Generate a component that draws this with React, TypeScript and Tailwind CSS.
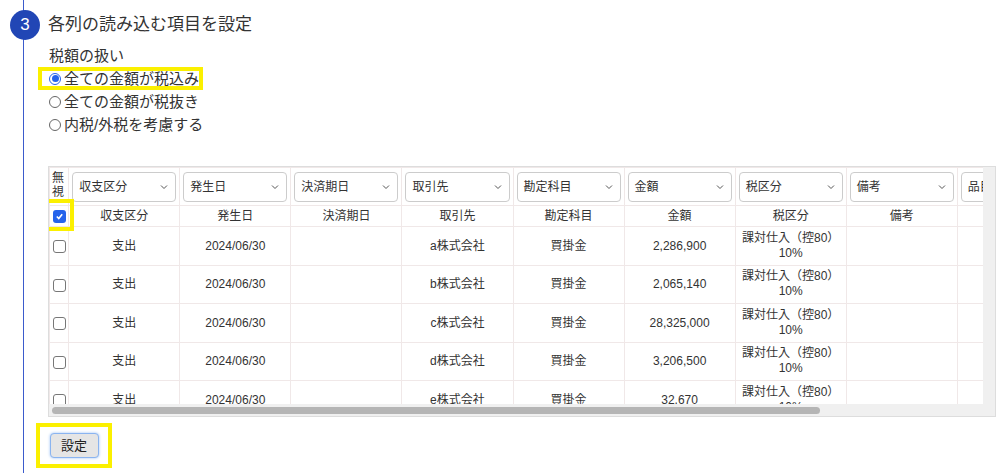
import React from 'react'

const cols = ['収支区分', '発生日', '決済期日', '取引先', '勘定科目', '金額', '税区分', '備考', '品目']
const rows = [
  ['a株式会社', '2,286,900'],
  ['b株式会社', '2,065,140'],
  ['c株式会社', '28,325,000'],
  ['d株式会社', '3,206,500'],
  ['e株式会社', '32,670'],
]

function Chevron() {
  return (
    <svg width="10" height="10" viewBox="0 0 10 10" className="shrink-0">
      <path d="M2 3.5 L5 6.5 L8 3.5" fill="none" stroke="#555" strokeWidth="1" />
    </svg>
  )
}

export default function App() {
  return (
    <div className="relative w-[1008px] h-[473px] bg-white overflow-hidden text-[#333]" style={{ fontFamily: '"Liberation Sans", "Noto Sans CJK JP", sans-serif' }}>
      <div className="absolute left-[23px] top-0 bottom-0 w-px bg-[#3b5bcc]" />
      <div className="relative flex flex-col pl-[10px] pt-[10px]">
        <div className="flex items-center gap-[8px]">
          <div className="w-[30px] h-[30px] rounded-full bg-[#2146b5] text-white flex items-center justify-center text-[17px]">3</div>
          <div className="text-[17px] text-[#333]">各列の読み込む項目を設定</div>
        </div>
        <div className="pl-[39px] mt-[4px] text-[15px] leading-[23px]">
          <div>税額の扱い</div>
          <div className="ml-[-11px] w-[165px] border-4 border-[#fbf000] pl-[7px] flex items-center gap-[3px] leading-[15px]">
            <span className="w-[12px] h-[12px] rounded-full border border-[#2563eb] flex items-center justify-center"><span className="w-[7px] h-[7px] rounded-full bg-[#2563eb]" /></span>
            全ての金額が税込み
          </div>
          <div className="flex items-center gap-[3px]"><span className="w-[12px] h-[12px] rounded-full border border-[#666]" />全ての金額が税抜き</div>
          <div className="flex items-center gap-[3px]"><span className="w-[12px] h-[12px] rounded-full border border-[#666]" />内税/外税を考慮する</div>
        </div>
        <div className="ml-[38px] mt-[30px] w-[948px] h-[251px] border border-[#ddd] bg-[#f0f0f0] flex flex-col overflow-hidden">
          <div className="w-[934px] h-[238px] bg-white overflow-hidden text-[12px]">
            <table className="border-collapse table-fixed w-[1020px]">
              <colgroup>
                <col className="w-[19px]" />
                {cols.map((c) => <col key={c} className="w-[110px]" />)}
              </colgroup>
              <tbody>
                <tr className="h-[38px]">
                  <td className="border border-[#f0e8e8] text-[12px] leading-[14px] align-top pt-[3px] pl-[2px] overflow-hidden">無視</td>
                  {cols.map((c) => (
                    <td key={c} className="border border-[#f0e8e8] px-[3px]">
                      <div className="h-[30px] border border-[#ccc] rounded-[4px] flex items-center justify-between px-[6px] text-[12px] overflow-hidden whitespace-nowrap">
                        <span>{c}</span><Chevron />
                      </div>
                    </td>
                  ))}
                </tr>
                <tr className="h-[21px]">
                  <td className="border border-[#f0e8e8] text-center relative">
                    <span className="absolute left-[-6px] top-[-7px] w-[30px] h-[32px] border-4 border-[#fbf000]" />
                    <span className="inline-flex w-[13px] h-[13px] rounded-[3px] bg-[#2563eb] items-center justify-center align-middle">
                      <svg width="9" height="9" viewBox="0 0 10 10"><path d="M2 5 L4.2 7.3 L8 2.5" fill="none" stroke="white" strokeWidth="1.8" /></svg>
                    </span>
                  </td>
                  {cols.map((c) => <td key={c} className="border border-[#f0e8e8] text-center">{c === '品目' ? '' : c}</td>)}
                </tr>
                {rows.map(([p, a]) => (
                  <tr key={p} className="h-[38.5px]">
                    <td className="border border-[#f0e8e8] text-center"><span className="inline-block w-[13px] h-[13px] rounded-[3px] border border-[#777] align-middle" /></td>
                    <td className="border border-[#f0e8e8] text-center">支出</td>
                    <td className="border border-[#f0e8e8] text-center">2024/06/30</td>
                    <td className="border border-[#f0e8e8]" />
                    <td className="border border-[#f0e8e8] text-center">{p}</td>
                    <td className="border border-[#f0e8e8] text-center">買掛金</td>
                    <td className="border border-[#f0e8e8] text-center">{a}</td>
                    <td className="border border-[#f0e8e8] text-center leading-[15px]">課対仕入（控80）<br />10%</td>
                    <td className="border border-[#f0e8e8]" />
                    <td className="border border-[#f0e8e8]" />
                  </tr>
                ))}
              </tbody>
            </table>
          </div>
          <div className="h-[12px] bg-[#f0f0f0] flex items-center px-[3px]">
            <div className="w-[768px] h-[7px] rounded-full bg-[#b5b5b5]" />
          </div>
        </div>
        <div className="ml-[26px] mt-[6px] w-[76px] h-[45px] border-4 border-[#fbf000] flex items-center justify-center">
          <button className="w-[49px] h-[25px] rounded-[4px] border border-[#8ab4f0] bg-[#e5e5e5] shadow-[0_0_3px_#9cc0f5] text-[13px] text-[#222]">設定</button>
        </div>
      </div>
    </div>
  )
}
